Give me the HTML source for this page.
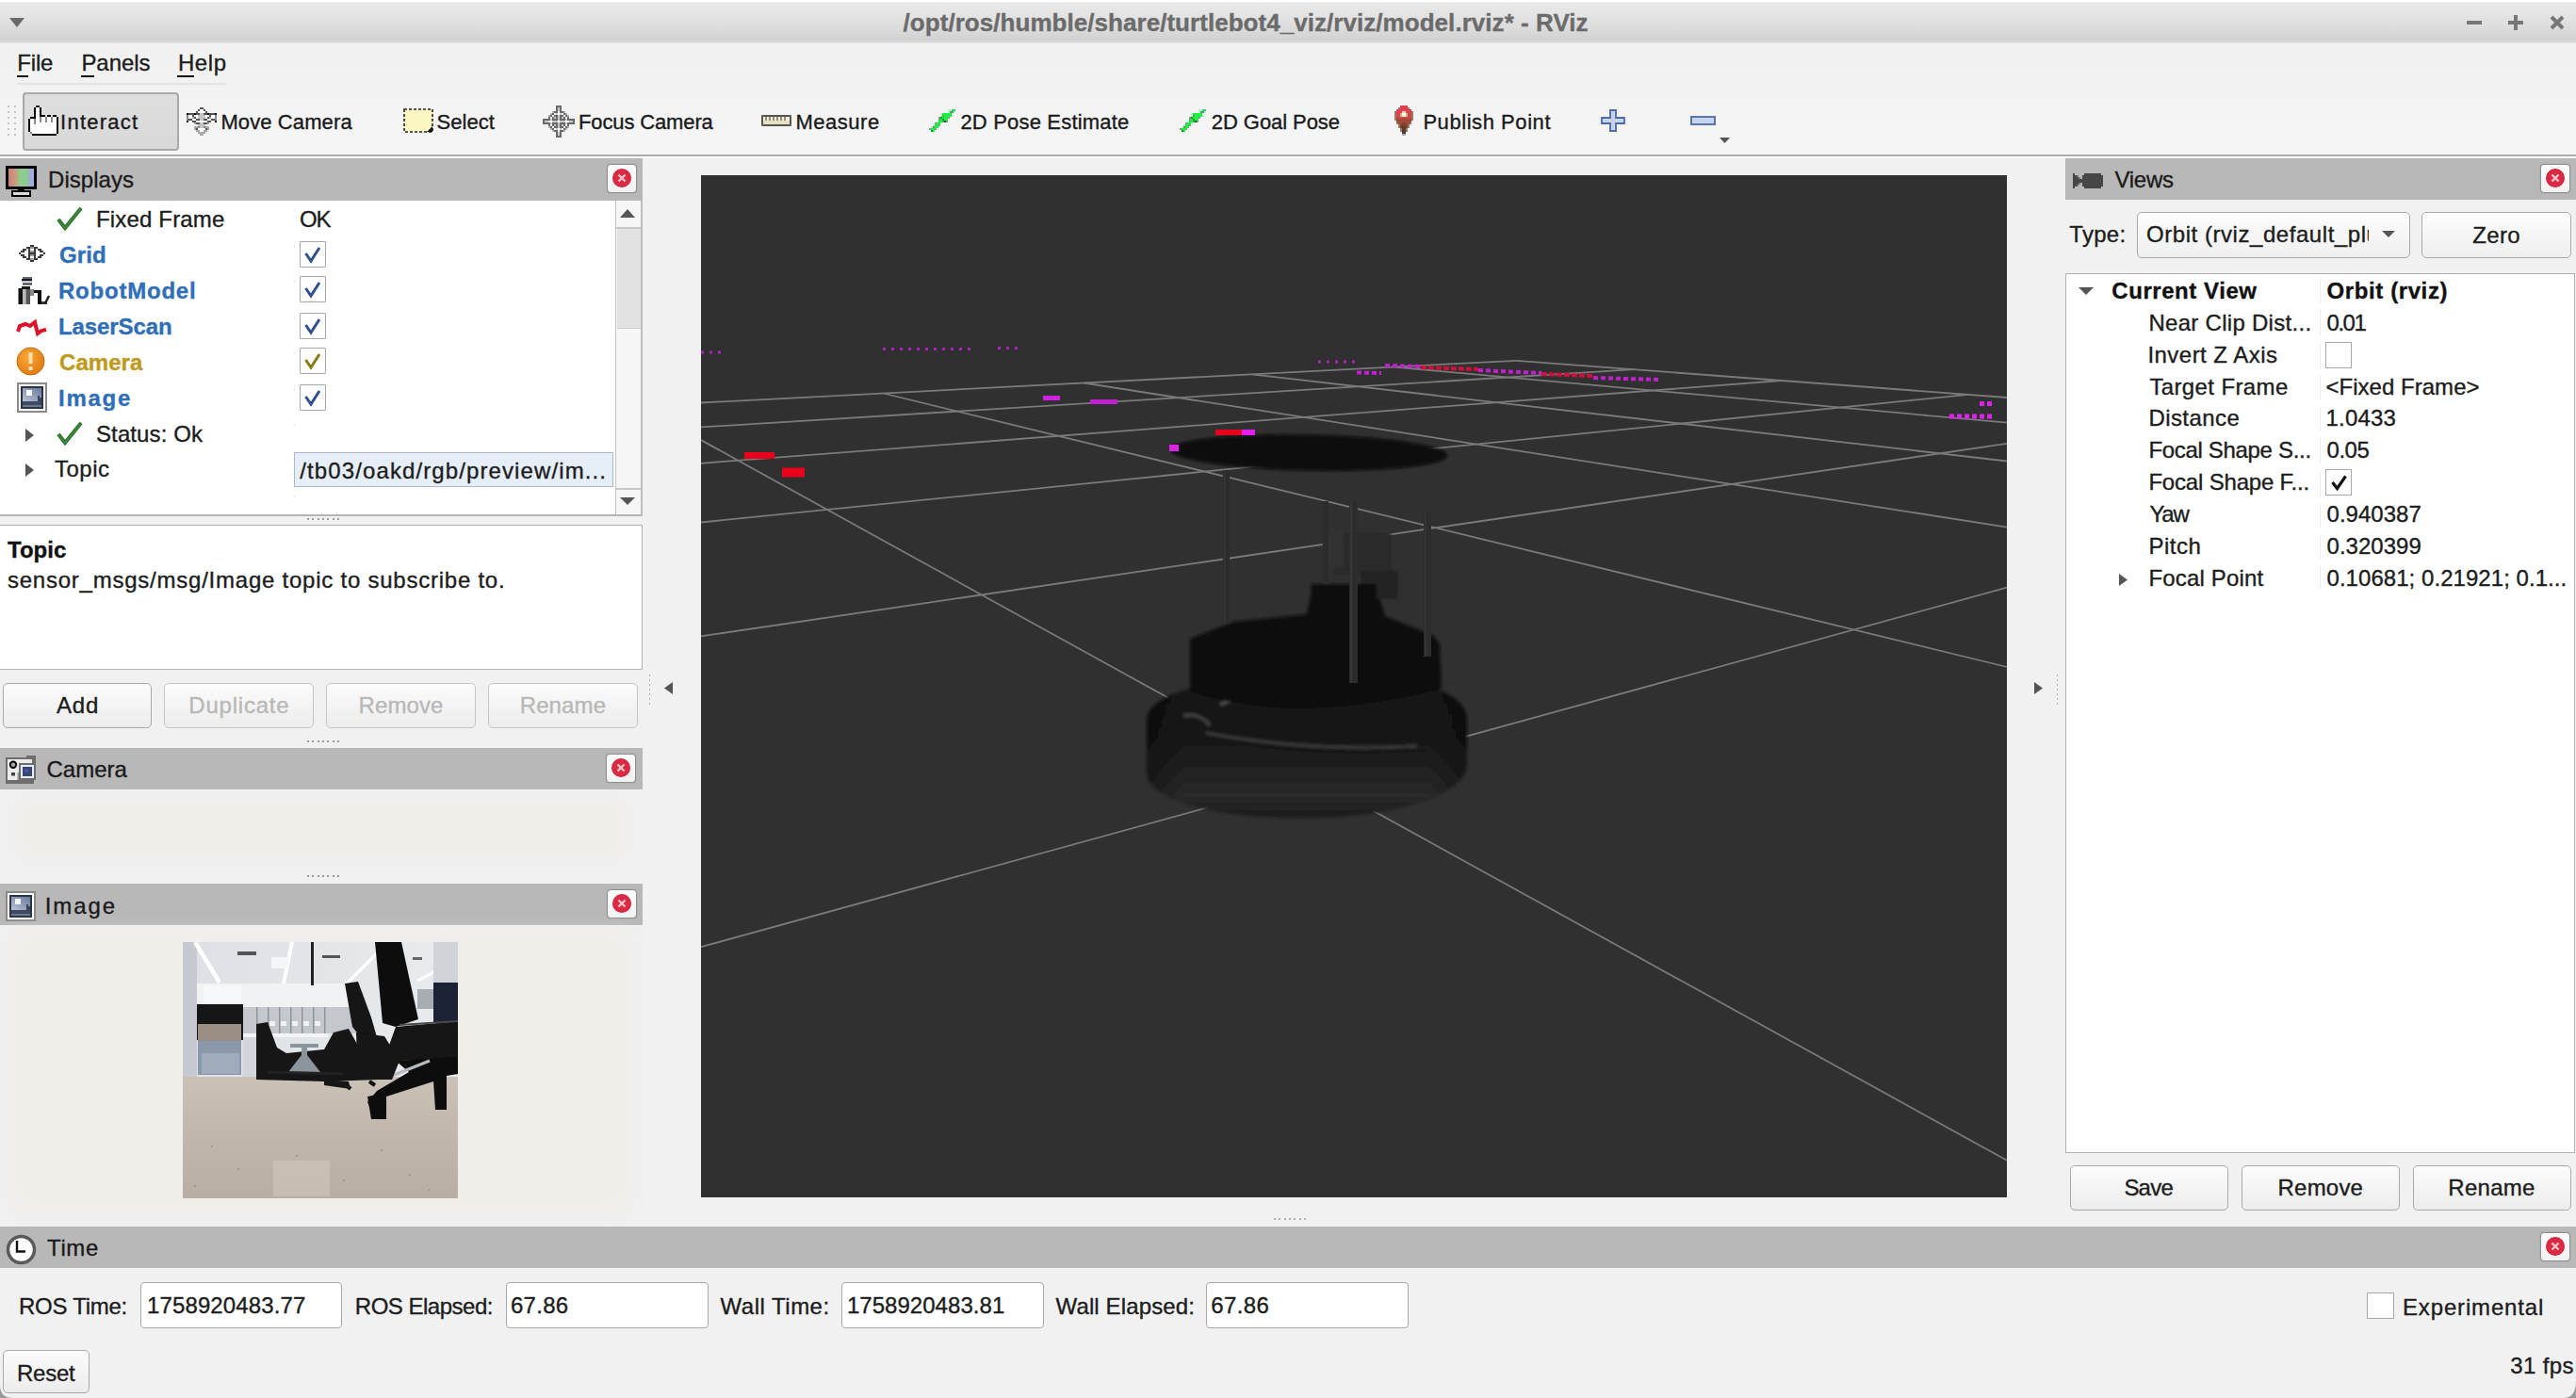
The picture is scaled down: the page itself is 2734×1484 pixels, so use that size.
<!DOCTYPE html>
<html><head><meta charset="utf-8"><style>
html,body{margin:0;padding:0;width:2734px;height:1484px;overflow:hidden;background:#f1f1f1;font-family:'Liberation Sans', sans-serif;}
.a{position:absolute;box-sizing:border-box;}
.t{position:absolute;height:0;line-height:0;white-space:pre;font-family:'Liberation Sans', sans-serif;-webkit-text-stroke:0.35px currentColor;}
svg{position:absolute;overflow:visible;}
</style></head><body>
<div class="a" style="left:0px;top:0px;width:2734px;height:46px;background:linear-gradient(#ffffff 0,#ffffff 2px,#e9e9e9 3px,#e2e2e2 20px,#d9d9d9 34px,#d1d1d1 42px,#dcdcdc 45px,#e8e8e8 46px)"></div><svg style="left:10px;top:19px" width="16" height="10" viewBox="0 0 16 10"><path d="M0 0 L16 0 L8 10 Z" fill="#6a6a6a"/></svg><div class="a" style="left:2618px;top:22px;width:16px;height:4px;background:#777"></div><div class="a" style="left:2662px;top:22px;width:16px;height:4px;background:#777"></div><div class="a" style="left:2668px;top:16px;width:4px;height:16px;background:#777"></div><svg style="left:2706px;top:16px" width="16" height="16" viewBox="0 0 16 16"><path d="M2 2 L14 14 M14 2 L2 14" stroke="#777" stroke-width="4"/></svg><div class="a" style="left:0px;top:46px;width:2734px;height:44px;background:linear-gradient(#f1f1f1,#f2f2f2)"></div><div class="a" style="left:18px;top:88px;width:222px;height:2px;background:#e3e3e3"></div><div class="a" style="left:18px;top:80px;width:12px;height:2px;background:#111"></div><div class="a" style="left:86px;top:80px;width:14px;height:2px;background:#111"></div><div class="a" style="left:188px;top:80px;width:18px;height:2px;background:#111"></div><div class="a" style="left:0px;top:90px;width:2734px;height:74px;background:linear-gradient(#f2f2f2,#f6f6f6)"></div><div class="a" style="left:0px;top:164px;width:2734px;height:2px;background:#adadad"></div><div class="a" style="left:0px;top:166px;width:2734px;height:2px;background:#fbfbfb"></div><div class="a" style="left:8px;top:112px;width:2px;height:2px;background:#c4c4c4"></div><div class="a" style="left:15px;top:112px;width:2px;height:2px;background:#c4c4c4"></div><div class="a" style="left:8px;top:118px;width:2px;height:2px;background:#c4c4c4"></div><div class="a" style="left:15px;top:118px;width:2px;height:2px;background:#c4c4c4"></div><div class="a" style="left:8px;top:124px;width:2px;height:2px;background:#c4c4c4"></div><div class="a" style="left:15px;top:124px;width:2px;height:2px;background:#c4c4c4"></div><div class="a" style="left:8px;top:130px;width:2px;height:2px;background:#c4c4c4"></div><div class="a" style="left:15px;top:130px;width:2px;height:2px;background:#c4c4c4"></div><div class="a" style="left:8px;top:136px;width:2px;height:2px;background:#c4c4c4"></div><div class="a" style="left:15px;top:136px;width:2px;height:2px;background:#c4c4c4"></div><div class="a" style="left:8px;top:142px;width:2px;height:2px;background:#c4c4c4"></div><div class="a" style="left:15px;top:142px;width:2px;height:2px;background:#c4c4c4"></div><div class="a" style="left:24px;top:98px;width:166px;height:62px;background:linear-gradient(#dedede,#d9d9d9);border:2px solid #a9a9a9;border-radius:4px"></div><svg style="left:30px;top:112px" width="32" height="32" shape-rendering="crispEdges"><rect x="8" y="0" width="4" height="2" fill="#0a0a0a"/><rect x="6" y="2" width="2" height="2" fill="#0a0a0a"/><rect x="8" y="2" width="4" height="2" fill="#ffffff"/><rect x="12" y="2" width="2" height="2" fill="#0a0a0a"/><rect x="6" y="4" width="2" height="2" fill="#0a0a0a"/><rect x="8" y="4" width="4" height="2" fill="#ffffff"/><rect x="12" y="4" width="2" height="2" fill="#0a0a0a"/><rect x="6" y="6" width="2" height="2" fill="#0a0a0a"/><rect x="8" y="6" width="4" height="2" fill="#ffffff"/><rect x="12" y="6" width="2" height="2" fill="#0a0a0a"/><rect x="6" y="8" width="2" height="2" fill="#0a0a0a"/><rect x="8" y="8" width="4" height="2" fill="#ffffff"/><rect x="12" y="8" width="2" height="2" fill="#0a0a0a"/><rect x="6" y="10" width="2" height="2" fill="#0a0a0a"/><rect x="8" y="10" width="4" height="2" fill="#ffffff"/><rect x="12" y="10" width="6" height="2" fill="#0a0a0a"/><rect x="20" y="10" width="4" height="2" fill="#0a0a0a"/><rect x="26" y="10" width="4" height="2" fill="#0a0a0a"/><rect x="2" y="12" width="6" height="2" fill="#0a0a0a"/><rect x="8" y="12" width="4" height="2" fill="#ffffff"/><rect x="12" y="12" width="2" height="2" fill="#8a8a8a"/><rect x="14" y="12" width="4" height="2" fill="#ffffff"/><rect x="18" y="12" width="2" height="2" fill="#8a8a8a"/><rect x="20" y="12" width="4" height="2" fill="#ffffff"/><rect x="24" y="12" width="2" height="2" fill="#8a8a8a"/><rect x="26" y="12" width="4" height="2" fill="#ffffff"/><rect x="30" y="12" width="2" height="2" fill="#0a0a0a"/><rect x="0" y="14" width="2" height="2" fill="#0a0a0a"/><rect x="2" y="14" width="4" height="2" fill="#ffffff"/><rect x="6" y="14" width="2" height="2" fill="#8a8a8a"/><rect x="8" y="14" width="4" height="2" fill="#ffffff"/><rect x="12" y="14" width="2" height="2" fill="#8a8a8a"/><rect x="14" y="14" width="4" height="2" fill="#ffffff"/><rect x="18" y="14" width="2" height="2" fill="#8a8a8a"/><rect x="20" y="14" width="4" height="2" fill="#ffffff"/><rect x="24" y="14" width="2" height="2" fill="#8a8a8a"/><rect x="26" y="14" width="4" height="2" fill="#ffffff"/><rect x="30" y="14" width="2" height="2" fill="#0a0a0a"/><rect x="0" y="16" width="2" height="2" fill="#0a0a0a"/><rect x="2" y="16" width="4" height="2" fill="#ffffff"/><rect x="6" y="16" width="2" height="2" fill="#8a8a8a"/><rect x="8" y="16" width="4" height="2" fill="#ffffff"/><rect x="12" y="16" width="2" height="2" fill="#8a8a8a"/><rect x="14" y="16" width="4" height="2" fill="#ffffff"/><rect x="18" y="16" width="2" height="2" fill="#8a8a8a"/><rect x="20" y="16" width="4" height="2" fill="#ffffff"/><rect x="24" y="16" width="2" height="2" fill="#8a8a8a"/><rect x="26" y="16" width="4" height="2" fill="#ffffff"/><rect x="30" y="16" width="2" height="2" fill="#0a0a0a"/><rect x="0" y="18" width="2" height="2" fill="#0a0a0a"/><rect x="2" y="18" width="4" height="2" fill="#ffffff"/><rect x="6" y="18" width="2" height="2" fill="#8a8a8a"/><rect x="8" y="18" width="22" height="2" fill="#ffffff"/><rect x="30" y="18" width="2" height="2" fill="#0a0a0a"/><rect x="0" y="20" width="2" height="2" fill="#0a0a0a"/><rect x="2" y="20" width="28" height="2" fill="#ffffff"/><rect x="30" y="20" width="2" height="2" fill="#0a0a0a"/><rect x="0" y="22" width="2" height="2" fill="#0a0a0a"/><rect x="2" y="22" width="28" height="2" fill="#ffffff"/><rect x="30" y="22" width="2" height="2" fill="#0a0a0a"/><rect x="0" y="24" width="2" height="2" fill="#0a0a0a"/><rect x="2" y="24" width="28" height="2" fill="#ffffff"/><rect x="30" y="24" width="2" height="2" fill="#0a0a0a"/><rect x="0" y="26" width="2" height="2" fill="#0a0a0a"/><rect x="2" y="26" width="28" height="2" fill="#ffffff"/><rect x="30" y="26" width="2" height="2" fill="#0a0a0a"/><rect x="2" y="28" width="2" height="2" fill="#8a8a8a"/><rect x="4" y="28" width="26" height="2" fill="#ffffff"/><rect x="30" y="28" width="2" height="2" fill="#0a0a0a"/><rect x="4" y="30" width="26" height="2" fill="#0a0a0a"/></svg><svg style="left:198px;top:114px" width="32" height="30" shape-rendering="crispEdges"><rect x="14" y="0" width="4" height="2" fill="#555"/><rect x="12" y="2" width="2" height="2" fill="#555"/><rect x="14" y="2" width="4" height="2" fill="#fff"/><rect x="18" y="2" width="2" height="2" fill="#555"/><rect x="10" y="4" width="2" height="2" fill="#555"/><rect x="12" y="4" width="8" height="2" fill="#fff"/><rect x="20" y="4" width="2" height="2" fill="#555"/><rect x="0" y="6" width="2" height="2" fill="#111"/><rect x="2" y="6" width="6" height="2" fill="#555"/><rect x="8" y="6" width="2" height="2" fill="#111"/><rect x="10" y="6" width="4" height="2" fill="#555"/><rect x="14" y="6" width="4" height="2" fill="#c4c4c4"/><rect x="18" y="6" width="4" height="2" fill="#555"/><rect x="22" y="6" width="2" height="2" fill="#111"/><rect x="24" y="6" width="6" height="2" fill="#555"/><rect x="30" y="6" width="2" height="2" fill="#111"/><rect x="0" y="8" width="2" height="2" fill="#8a8a8a"/><rect x="2" y="8" width="4" height="2" fill="#fff"/><rect x="6" y="8" width="2" height="2" fill="#555"/><rect x="8" y="8" width="4" height="2" fill="#fff"/><rect x="12" y="8" width="8" height="2" fill="#c4c4c4"/><rect x="20" y="8" width="4" height="2" fill="#fff"/><rect x="24" y="8" width="2" height="2" fill="#555"/><rect x="26" y="8" width="4" height="2" fill="#fff"/><rect x="30" y="8" width="2" height="2" fill="#8a8a8a"/><rect x="0" y="10" width="2" height="2" fill="#8a8a8a"/><rect x="2" y="10" width="4" height="2" fill="#fff"/><rect x="6" y="10" width="2" height="2" fill="#a8a8a8"/><rect x="8" y="10" width="2" height="2" fill="#555"/><rect x="10" y="10" width="2" height="2" fill="#fff"/><rect x="12" y="10" width="8" height="2" fill="#c4c4c4"/><rect x="20" y="10" width="2" height="2" fill="#fff"/><rect x="22" y="10" width="2" height="2" fill="#555"/><rect x="24" y="10" width="2" height="2" fill="#a8a8a8"/><rect x="26" y="10" width="4" height="2" fill="#fff"/><rect x="30" y="10" width="2" height="2" fill="#8a8a8a"/><rect x="0" y="12" width="2" height="2" fill="#8a8a8a"/><rect x="2" y="12" width="4" height="2" fill="#555"/><rect x="6" y="12" width="4" height="2" fill="#fff"/><rect x="10" y="12" width="4" height="2" fill="#555"/><rect x="14" y="12" width="4" height="2" fill="#c4c4c4"/><rect x="18" y="12" width="4" height="2" fill="#555"/><rect x="22" y="12" width="4" height="2" fill="#fff"/><rect x="26" y="12" width="4" height="2" fill="#555"/><rect x="30" y="12" width="2" height="2" fill="#8a8a8a"/><rect x="0" y="14" width="2" height="2" fill="#111"/><rect x="2" y="14" width="4" height="2" fill="#fff"/><rect x="6" y="14" width="4" height="2" fill="#555"/><rect x="10" y="14" width="12" height="2" fill="#fff"/><rect x="22" y="14" width="4" height="2" fill="#555"/><rect x="26" y="14" width="4" height="2" fill="#fff"/><rect x="30" y="14" width="2" height="2" fill="#111"/><rect x="8" y="16" width="2" height="2" fill="#a8a8a8"/><rect x="10" y="16" width="4" height="2" fill="#555"/><rect x="14" y="16" width="4" height="2" fill="#c4c4c4"/><rect x="18" y="16" width="4" height="2" fill="#555"/><rect x="22" y="16" width="2" height="2" fill="#a8a8a8"/><rect x="10" y="18" width="2" height="2" fill="#fff"/><rect x="12" y="18" width="8" height="2" fill="#c4c4c4"/><rect x="20" y="18" width="2" height="2" fill="#fff"/><rect x="8" y="20" width="4" height="2" fill="#a8a8a8"/><rect x="12" y="20" width="2" height="2" fill="#8a8a8a"/><rect x="14" y="20" width="4" height="2" fill="#c4c4c4"/><rect x="18" y="20" width="2" height="2" fill="#8a8a8a"/><rect x="20" y="20" width="4" height="2" fill="#a8a8a8"/><rect x="8" y="22" width="2" height="2" fill="#a8a8a8"/><rect x="10" y="22" width="2" height="2" fill="#555"/><rect x="12" y="22" width="8" height="2" fill="#fff"/><rect x="20" y="22" width="2" height="2" fill="#555"/><rect x="22" y="22" width="2" height="2" fill="#a8a8a8"/><rect x="10" y="24" width="4" height="2" fill="#a8a8a8"/><rect x="14" y="24" width="4" height="2" fill="#fff"/><rect x="18" y="24" width="4" height="2" fill="#a8a8a8"/><rect x="12" y="26" width="8" height="2" fill="#a8a8a8"/><rect x="14" y="28" width="4" height="2" fill="#a8a8a8"/></svg><svg style="left:428px;top:115px" width="32" height="26" viewBox="0 0 32 26"><rect x="1" y="1" width="30" height="24" fill="#fbf7c0" stroke="#222" stroke-width="1.6" stroke-dasharray="3 2"/><path d="M25 25 L31 19 L31 25 Z" fill="#111"/></svg><svg style="left:576px;top:112px" width="34" height="34" shape-rendering="crispEdges"><rect x="14" y="0" width="6" height="2" fill="#6a6a6a"/><rect x="14" y="2" width="2" height="2" fill="#6a6a6a"/><rect x="16" y="2" width="2" height="2" fill="#c8c8c8"/><rect x="18" y="2" width="2" height="2" fill="#6a6a6a"/><rect x="14" y="4" width="2" height="2" fill="#6a6a6a"/><rect x="16" y="4" width="2" height="2" fill="#c8c8c8"/><rect x="18" y="4" width="2" height="2" fill="#6a6a6a"/><rect x="10" y="6" width="2" height="2" fill="#b0b0b0"/><rect x="12" y="6" width="4" height="2" fill="#6a6a6a"/><rect x="16" y="6" width="2" height="2" fill="#fff"/><rect x="18" y="6" width="4" height="2" fill="#6a6a6a"/><rect x="22" y="6" width="2" height="2" fill="#b0b0b0"/><rect x="8" y="8" width="2" height="2" fill="#b0b0b0"/><rect x="10" y="8" width="2" height="2" fill="#6a6a6a"/><rect x="12" y="8" width="2" height="2" fill="#fff"/><rect x="14" y="8" width="2" height="2" fill="#c8c8c8"/><rect x="16" y="8" width="2" height="2" fill="#fff"/><rect x="18" y="8" width="2" height="2" fill="#c8c8c8"/><rect x="20" y="8" width="2" height="2" fill="#fff"/><rect x="22" y="8" width="2" height="2" fill="#6a6a6a"/><rect x="24" y="8" width="2" height="2" fill="#b0b0b0"/><rect x="6" y="10" width="2" height="2" fill="#b0b0b0"/><rect x="8" y="10" width="2" height="2" fill="#6a6a6a"/><rect x="10" y="10" width="2" height="2" fill="#fff"/><rect x="12" y="10" width="4" height="2" fill="#6a6a6a"/><rect x="16" y="10" width="2" height="2" fill="#c8c8c8"/><rect x="18" y="10" width="4" height="2" fill="#6a6a6a"/><rect x="22" y="10" width="2" height="2" fill="#fff"/><rect x="24" y="10" width="2" height="2" fill="#6a6a6a"/><rect x="26" y="10" width="2" height="2" fill="#b0b0b0"/><rect x="6" y="12" width="2" height="2" fill="#6a6a6a"/><rect x="8" y="12" width="2" height="2" fill="#fff"/><rect x="10" y="12" width="2" height="2" fill="#6a6a6a"/><rect x="12" y="12" width="2" height="2" fill="#c8c8c8"/><rect x="14" y="12" width="2" height="2" fill="#6a6a6a"/><rect x="16" y="12" width="2" height="2" fill="#c8c8c8"/><rect x="18" y="12" width="2" height="2" fill="#6a6a6a"/><rect x="20" y="12" width="2" height="2" fill="#c8c8c8"/><rect x="22" y="12" width="2" height="2" fill="#6a6a6a"/><rect x="24" y="12" width="2" height="2" fill="#fff"/><rect x="26" y="12" width="2" height="2" fill="#6a6a6a"/><rect x="0" y="14" width="8" height="2" fill="#6a6a6a"/><rect x="8" y="14" width="2" height="2" fill="#c8c8c8"/><rect x="10" y="14" width="6" height="2" fill="#6a6a6a"/><rect x="16" y="14" width="2" height="2" fill="#c8c8c8"/><rect x="18" y="14" width="6" height="2" fill="#6a6a6a"/><rect x="24" y="14" width="2" height="2" fill="#c8c8c8"/><rect x="26" y="14" width="8" height="2" fill="#6a6a6a"/><rect x="0" y="16" width="2" height="2" fill="#6a6a6a"/><rect x="2" y="16" width="4" height="2" fill="#c8c8c8"/><rect x="6" y="16" width="4" height="2" fill="#fff"/><rect x="10" y="16" width="6" height="2" fill="#c8c8c8"/><rect x="16" y="16" width="2" height="2" fill="#fff"/><rect x="18" y="16" width="6" height="2" fill="#c8c8c8"/><rect x="24" y="16" width="4" height="2" fill="#fff"/><rect x="28" y="16" width="4" height="2" fill="#c8c8c8"/><rect x="32" y="16" width="2" height="2" fill="#6a6a6a"/><rect x="0" y="18" width="8" height="2" fill="#6a6a6a"/><rect x="8" y="18" width="2" height="2" fill="#c8c8c8"/><rect x="10" y="18" width="6" height="2" fill="#6a6a6a"/><rect x="16" y="18" width="2" height="2" fill="#c8c8c8"/><rect x="18" y="18" width="6" height="2" fill="#6a6a6a"/><rect x="24" y="18" width="2" height="2" fill="#c8c8c8"/><rect x="26" y="18" width="8" height="2" fill="#6a6a6a"/><rect x="6" y="20" width="2" height="2" fill="#6a6a6a"/><rect x="8" y="20" width="2" height="2" fill="#fff"/><rect x="10" y="20" width="2" height="2" fill="#6a6a6a"/><rect x="12" y="20" width="2" height="2" fill="#c8c8c8"/><rect x="14" y="20" width="2" height="2" fill="#6a6a6a"/><rect x="16" y="20" width="2" height="2" fill="#c8c8c8"/><rect x="18" y="20" width="2" height="2" fill="#6a6a6a"/><rect x="20" y="20" width="2" height="2" fill="#c8c8c8"/><rect x="22" y="20" width="2" height="2" fill="#6a6a6a"/><rect x="24" y="20" width="2" height="2" fill="#fff"/><rect x="26" y="20" width="2" height="2" fill="#6a6a6a"/><rect x="6" y="22" width="2" height="2" fill="#b0b0b0"/><rect x="8" y="22" width="2" height="2" fill="#6a6a6a"/><rect x="10" y="22" width="2" height="2" fill="#fff"/><rect x="12" y="22" width="4" height="2" fill="#6a6a6a"/><rect x="16" y="22" width="2" height="2" fill="#c8c8c8"/><rect x="18" y="22" width="4" height="2" fill="#6a6a6a"/><rect x="22" y="22" width="2" height="2" fill="#fff"/><rect x="24" y="22" width="2" height="2" fill="#6a6a6a"/><rect x="26" y="22" width="2" height="2" fill="#b0b0b0"/><rect x="8" y="24" width="2" height="2" fill="#b0b0b0"/><rect x="10" y="24" width="2" height="2" fill="#6a6a6a"/><rect x="12" y="24" width="2" height="2" fill="#fff"/><rect x="14" y="24" width="2" height="2" fill="#c8c8c8"/><rect x="16" y="24" width="2" height="2" fill="#fff"/><rect x="18" y="24" width="2" height="2" fill="#c8c8c8"/><rect x="20" y="24" width="2" height="2" fill="#fff"/><rect x="22" y="24" width="2" height="2" fill="#6a6a6a"/><rect x="24" y="24" width="2" height="2" fill="#b0b0b0"/><rect x="10" y="26" width="2" height="2" fill="#b0b0b0"/><rect x="12" y="26" width="4" height="2" fill="#6a6a6a"/><rect x="16" y="26" width="2" height="2" fill="#fff"/><rect x="18" y="26" width="4" height="2" fill="#6a6a6a"/><rect x="22" y="26" width="2" height="2" fill="#b0b0b0"/><rect x="14" y="28" width="2" height="2" fill="#6a6a6a"/><rect x="16" y="28" width="2" height="2" fill="#c8c8c8"/><rect x="18" y="28" width="2" height="2" fill="#6a6a6a"/><rect x="14" y="30" width="2" height="2" fill="#6a6a6a"/><rect x="16" y="30" width="2" height="2" fill="#c8c8c8"/><rect x="18" y="30" width="2" height="2" fill="#6a6a6a"/><rect x="14" y="32" width="6" height="2" fill="#6a6a6a"/></svg><svg style="left:808px;top:122px" width="32" height="12" shape-rendering="crispEdges"><rect x="0" y="0" width="2" height="2" fill="#6a6a66"/><rect x="2" y="0" width="28" height="2" fill="#57544c"/><rect x="30" y="0" width="2" height="2" fill="#6a6a66"/><rect x="0" y="2" width="2" height="2" fill="#57544c"/><rect x="2" y="2" width="2" height="2" fill="#f2eed8"/><rect x="4" y="2" width="2" height="2" fill="#8e8b78"/><rect x="6" y="2" width="2" height="2" fill="#f2eed8"/><rect x="8" y="2" width="2" height="2" fill="#8e8b78"/><rect x="10" y="2" width="2" height="2" fill="#f2eed8"/><rect x="12" y="2" width="2" height="2" fill="#8e8b78"/><rect x="14" y="2" width="2" height="2" fill="#f2eed8"/><rect x="16" y="2" width="2" height="2" fill="#8e8b78"/><rect x="18" y="2" width="2" height="2" fill="#f2eed8"/><rect x="20" y="2" width="2" height="2" fill="#8e8b78"/><rect x="22" y="2" width="2" height="2" fill="#f2eed8"/><rect x="24" y="2" width="2" height="2" fill="#8e8b78"/><rect x="26" y="2" width="4" height="2" fill="#f2eed8"/><rect x="30" y="2" width="2" height="2" fill="#57544c"/><rect x="0" y="4" width="2" height="2" fill="#57544c"/><rect x="2" y="4" width="2" height="2" fill="#f2eed8"/><rect x="4" y="4" width="2" height="2" fill="#8e8b78"/><rect x="6" y="4" width="2" height="2" fill="#f2eed8"/><rect x="8" y="4" width="2" height="2" fill="#8e8b78"/><rect x="10" y="4" width="2" height="2" fill="#f2eed8"/><rect x="12" y="4" width="2" height="2" fill="#8e8b78"/><rect x="14" y="4" width="2" height="2" fill="#f2eed8"/><rect x="16" y="4" width="2" height="2" fill="#8e8b78"/><rect x="18" y="4" width="2" height="2" fill="#f2eed8"/><rect x="20" y="4" width="2" height="2" fill="#8e8b78"/><rect x="22" y="4" width="2" height="2" fill="#f2eed8"/><rect x="24" y="4" width="2" height="2" fill="#8e8b78"/><rect x="26" y="4" width="4" height="2" fill="#f2eed8"/><rect x="30" y="4" width="2" height="2" fill="#57544c"/><rect x="0" y="6" width="2" height="2" fill="#57544c"/><rect x="2" y="6" width="28" height="2" fill="#e6e0c6"/><rect x="30" y="6" width="2" height="2" fill="#57544c"/><rect x="0" y="8" width="2" height="2" fill="#57544c"/><rect x="2" y="8" width="28" height="2" fill="#e6e0c6"/><rect x="30" y="8" width="2" height="2" fill="#57544c"/><rect x="0" y="10" width="2" height="2" fill="#6a6a66"/><rect x="2" y="10" width="28" height="2" fill="#57544c"/><rect x="30" y="10" width="2" height="2" fill="#6a6a66"/></svg><svg style="left:984px;top:116px" width="32" height="24" shape-rendering="crispEdges"><rect x="22" y="0" width="4" height="2" fill="#b0f8c8"/><rect x="26" y="0" width="4" height="2" fill="#30d070"/><rect x="22" y="2" width="2" height="2" fill="#b0f8c8"/><rect x="24" y="2" width="4" height="2" fill="#5a9a6a"/><rect x="28" y="2" width="2" height="2" fill="#b0f8c8"/><rect x="14" y="4" width="2" height="2" fill="#b0f8c8"/><rect x="16" y="4" width="10" height="2" fill="#1ef040"/><rect x="14" y="6" width="2" height="2" fill="#b0f8c8"/><rect x="16" y="6" width="2" height="2" fill="#5a9a6a"/><rect x="18" y="6" width="8" height="2" fill="#1ef040"/><rect x="26" y="6" width="2" height="2" fill="#b0f8c8"/><rect x="12" y="8" width="2" height="2" fill="#8a9a8a"/><rect x="14" y="8" width="2" height="2" fill="#00a818"/><rect x="16" y="8" width="6" height="2" fill="#1ef040"/><rect x="22" y="8" width="2" height="2" fill="#8a9a8a"/><rect x="12" y="10" width="2" height="2" fill="#8a9a8a"/><rect x="14" y="10" width="2" height="2" fill="#1ef040"/><rect x="16" y="10" width="2" height="2" fill="#00a818"/><rect x="18" y="10" width="4" height="2" fill="#1ef040"/><rect x="10" y="12" width="2" height="2" fill="#b0f8c8"/><rect x="12" y="12" width="4" height="2" fill="#1ef040"/><rect x="16" y="12" width="2" height="2" fill="#5a9a6a"/><rect x="18" y="12" width="2" height="2" fill="#006a20"/><rect x="20" y="12" width="2" height="2" fill="#8a9a8a"/><rect x="8" y="14" width="2" height="2" fill="#8a9a8a"/><rect x="10" y="14" width="4" height="2" fill="#1ef040"/><rect x="14" y="14" width="2" height="2" fill="#b0f8c8"/><rect x="6" y="16" width="2" height="2" fill="#b0f8c8"/><rect x="8" y="16" width="4" height="2" fill="#1ef040"/><rect x="12" y="16" width="2" height="2" fill="#8a9a8a"/><rect x="4" y="18" width="2" height="2" fill="#b0f8c8"/><rect x="6" y="18" width="2" height="2" fill="#5a9a6a"/><rect x="8" y="18" width="4" height="2" fill="#1ef040"/><rect x="2" y="20" width="2" height="2" fill="#8a9a8a"/><rect x="4" y="20" width="4" height="2" fill="#1ef040"/><rect x="8" y="20" width="2" height="2" fill="#8a9a8a"/><rect x="4" y="22" width="2" height="2" fill="#00a818"/><rect x="6" y="22" width="2" height="2" fill="#1ef040"/></svg><svg style="left:1250px;top:116px" width="32" height="24" shape-rendering="crispEdges"><rect x="22" y="0" width="4" height="2" fill="#b0f8c8"/><rect x="26" y="0" width="4" height="2" fill="#30d070"/><rect x="22" y="2" width="2" height="2" fill="#b0f8c8"/><rect x="24" y="2" width="4" height="2" fill="#5a9a6a"/><rect x="28" y="2" width="2" height="2" fill="#b0f8c8"/><rect x="14" y="4" width="2" height="2" fill="#b0f8c8"/><rect x="16" y="4" width="10" height="2" fill="#1ef040"/><rect x="14" y="6" width="2" height="2" fill="#b0f8c8"/><rect x="16" y="6" width="2" height="2" fill="#5a9a6a"/><rect x="18" y="6" width="8" height="2" fill="#1ef040"/><rect x="26" y="6" width="2" height="2" fill="#b0f8c8"/><rect x="12" y="8" width="2" height="2" fill="#8a9a8a"/><rect x="14" y="8" width="2" height="2" fill="#00a818"/><rect x="16" y="8" width="6" height="2" fill="#1ef040"/><rect x="22" y="8" width="2" height="2" fill="#8a9a8a"/><rect x="12" y="10" width="2" height="2" fill="#8a9a8a"/><rect x="14" y="10" width="2" height="2" fill="#1ef040"/><rect x="16" y="10" width="2" height="2" fill="#00a818"/><rect x="18" y="10" width="4" height="2" fill="#1ef040"/><rect x="10" y="12" width="2" height="2" fill="#b0f8c8"/><rect x="12" y="12" width="4" height="2" fill="#1ef040"/><rect x="16" y="12" width="2" height="2" fill="#5a9a6a"/><rect x="18" y="12" width="2" height="2" fill="#006a20"/><rect x="20" y="12" width="2" height="2" fill="#8a9a8a"/><rect x="8" y="14" width="2" height="2" fill="#8a9a8a"/><rect x="10" y="14" width="4" height="2" fill="#1ef040"/><rect x="14" y="14" width="2" height="2" fill="#b0f8c8"/><rect x="6" y="16" width="2" height="2" fill="#b0f8c8"/><rect x="8" y="16" width="4" height="2" fill="#1ef040"/><rect x="12" y="16" width="2" height="2" fill="#8a9a8a"/><rect x="4" y="18" width="2" height="2" fill="#b0f8c8"/><rect x="6" y="18" width="2" height="2" fill="#5a9a6a"/><rect x="8" y="18" width="4" height="2" fill="#1ef040"/><rect x="2" y="20" width="2" height="2" fill="#8a9a8a"/><rect x="4" y="20" width="4" height="2" fill="#1ef040"/><rect x="8" y="20" width="2" height="2" fill="#8a9a8a"/><rect x="4" y="22" width="2" height="2" fill="#00a818"/><rect x="6" y="22" width="2" height="2" fill="#1ef040"/></svg><svg style="left:1480px;top:112px" width="20" height="32" shape-rendering="crispEdges"><rect x="6" y="0" width="8" height="2" fill="#de4250"/><rect x="4" y="2" width="2" height="2" fill="#9a7a6a"/><rect x="6" y="2" width="8" height="2" fill="#de4250"/><rect x="14" y="2" width="2" height="2" fill="#9a7a6a"/><rect x="2" y="4" width="16" height="2" fill="#de4250"/><rect x="0" y="6" width="2" height="2" fill="#9a7a6a"/><rect x="2" y="6" width="6" height="2" fill="#de4250"/><rect x="8" y="6" width="4" height="2" fill="#f8d0d0"/><rect x="12" y="6" width="6" height="2" fill="#de4250"/><rect x="18" y="6" width="2" height="2" fill="#9a7a6a"/><rect x="0" y="8" width="2" height="2" fill="#9a7a6a"/><rect x="2" y="8" width="4" height="2" fill="#de4250"/><rect x="6" y="8" width="2" height="2" fill="#c8b890"/><rect x="8" y="8" width="4" height="2" fill="#fff8d8"/><rect x="12" y="8" width="2" height="2" fill="#c8b890"/><rect x="14" y="8" width="2" height="2" fill="#de4250"/><rect x="16" y="8" width="2" height="2" fill="#c44a40"/><rect x="18" y="8" width="2" height="2" fill="#9a7a6a"/><rect x="0" y="10" width="2" height="2" fill="#9a7a6a"/><rect x="2" y="10" width="4" height="2" fill="#de4250"/><rect x="6" y="10" width="2" height="2" fill="#c8b890"/><rect x="8" y="10" width="4" height="2" fill="#fff8d8"/><rect x="12" y="10" width="2" height="2" fill="#c8b890"/><rect x="14" y="10" width="4" height="2" fill="#c44a40"/><rect x="18" y="10" width="2" height="2" fill="#9a7a6a"/><rect x="0" y="12" width="2" height="2" fill="#9a7a6a"/><rect x="2" y="12" width="16" height="2" fill="#c44a40"/><rect x="18" y="12" width="2" height="2" fill="#9a7a6a"/><rect x="0" y="14" width="2" height="2" fill="#9a7a6a"/><rect x="2" y="14" width="16" height="2" fill="#a04a38"/><rect x="18" y="14" width="2" height="2" fill="#9a7a6a"/><rect x="2" y="16" width="16" height="2" fill="#a04a38"/><rect x="2" y="18" width="2" height="2" fill="#9a7a6a"/><rect x="4" y="18" width="4" height="2" fill="#a04a38"/><rect x="8" y="18" width="4" height="2" fill="#7e4430"/><rect x="12" y="18" width="4" height="2" fill="#a04a38"/><rect x="16" y="18" width="2" height="2" fill="#9a7a6a"/><rect x="4" y="20" width="2" height="2" fill="#9a7a6a"/><rect x="6" y="20" width="8" height="2" fill="#7e4430"/><rect x="14" y="20" width="2" height="2" fill="#9a7a6a"/><rect x="4" y="22" width="2" height="2" fill="#9a7a6a"/><rect x="6" y="22" width="2" height="2" fill="#7e4430"/><rect x="8" y="22" width="4" height="2" fill="#5e3828"/><rect x="12" y="22" width="2" height="2" fill="#7e4430"/><rect x="14" y="22" width="2" height="2" fill="#9a7a6a"/><rect x="6" y="24" width="2" height="2" fill="#9a7a6a"/><rect x="8" y="24" width="4" height="2" fill="#5e3828"/><rect x="12" y="24" width="2" height="2" fill="#9a7a6a"/><rect x="6" y="26" width="2" height="2" fill="#9a7a6a"/><rect x="8" y="26" width="4" height="2" fill="#5e3828"/><rect x="12" y="26" width="2" height="2" fill="#9a7a6a"/><rect x="8" y="28" width="4" height="2" fill="#404040"/><rect x="8" y="30" width="4" height="2" fill="#a8a8a8"/></svg><svg style="left:1699px;top:116px" width="26" height="24" viewBox="0 0 26 24"><path d="M10 1 H16 V9 H25 V15 H16 V23 H10 V15 H1 V9 H10 Z" fill="#c8d4ec" stroke="#4a6aa8" stroke-width="1.8"/></svg><svg style="left:1794px;top:123px" width="27" height="10" viewBox="0 0 27 10"><rect x="1" y="1" width="25" height="8" fill="#c8d4ec" stroke="#4a6aa8" stroke-width="1.8"/></svg><svg style="left:1825px;top:146px" width="11" height="6" viewBox="0 0 11 6"><path d="M0 0 H11 L5.5 6 Z" fill="#555"/></svg><div class="a" style="left:0px;top:168px;width:682px;height:45px;background:#b8b8b8"></div><svg style="left:6px;top:176px" width="33" height="33" viewBox="0 0 33 33"><defs><linearGradient id="scr" x1="0" x2="1"><stop offset="0" stop-color="#d07878"/><stop offset="0.33" stop-color="#c8a080"/><stop offset="0.45" stop-color="#88d088"/><stop offset="0.7" stop-color="#90c890"/><stop offset="0.8" stop-color="#9ab0d0"/><stop offset="1" stop-color="#a8a8f8"/></linearGradient></defs><rect x="1.5" y="1.5" width="30" height="22" fill="url(#scr)" stroke="#000" stroke-width="3"/><rect x="13" y="24" width="7" height="4" fill="#000"/><rect x="7" y="27" width="19" height="5" fill="#ddd" stroke="#000" stroke-width="2"/></svg><div class="a" style="left:644px;top:174px;width:32px;height:31px;background:linear-gradient(#fdfdfd,#f1f1f1);border:1px solid #8f8f8f;border-radius:4px;box-shadow:0 0 1px #777"></div><svg style="left:649px;top:178px" width="22" height="22" viewBox="0 0 22 22"><circle cx="11" cy="11" r="10" fill="#d0203a"/><circle cx="11" cy="11" r="9" fill="#dc2a44"/><path d="M7.5 7.5 L14.5 14.5 M14.5 7.5 L7.5 14.5" stroke="#f4c8c8" stroke-width="2.4"/></svg><div class="a" style="left:0px;top:213px;width:653px;height:334px;background:#fff"></div><div class="a" style="left:0px;top:546px;width:682px;height:2px;background:#b4b4b4"></div><div class="a" style="left:680px;top:213px;width:2px;height:335px;background:#bdbdbd"></div><div class="a" style="left:653px;top:213px;width:27px;height:333px;background:#f6f6f6;border-left:1.5px solid #c4c4c4"></div><div class="a" style="left:654px;top:241px;width:26px;height:2px;background:#c8c8c8"></div><div class="a" style="left:655px;top:243px;width:25px;height:106px;background:#e2e2e2;border-bottom:1.5px solid #cdcdcd"></div><div class="a" style="left:654px;top:518px;width:26px;height:2px;background:#c8c8c8"></div><svg style="left:658px;top:222px" width="16" height="9" viewBox="0 0 16 9"><path d="M0 9 L8 0 L16 9 Z" fill="#555"/></svg><svg style="left:658px;top:528px" width="16" height="8" viewBox="0 0 16 8"><path d="M0 0 H16 L8 8 Z" fill="#555"/></svg><div class="a" style="left:312px;top:222px;width:1px;height:320px;background:repeating-linear-gradient(#e4e4e4 0 2px,transparent 2px 38px)"></div><svg style="left:60px;top:219px" width="28" height="26" viewBox="0 0 28 26"><path d="M2 14 L9 23 L26 2" fill="none" stroke="#2a6a2a" stroke-width="4" stroke-linejoin="miter"/><path d="M2 14 L9 23 L26 2" fill="none" stroke="#3c8a3c" stroke-width="2"/></svg><svg style="left:20px;top:260px" width="28" height="18" shape-rendering="crispEdges"><rect x="12" y="0" width="4" height="2" fill="#3a3a3a"/><rect x="8" y="2" width="4" height="2" fill="#3a3a3a"/><rect x="12" y="2" width="4" height="2" fill="#9a9a9a"/><rect x="16" y="2" width="4" height="2" fill="#3a3a3a"/><rect x="4" y="4" width="4" height="2" fill="#3a3a3a"/><rect x="8" y="4" width="2" height="2" fill="#ffffff"/><rect x="10" y="4" width="2" height="2" fill="#3a3a3a"/><rect x="12" y="4" width="4" height="2" fill="#ffffff"/><rect x="16" y="4" width="2" height="2" fill="#3a3a3a"/><rect x="18" y="4" width="2" height="2" fill="#ffffff"/><rect x="20" y="4" width="4" height="2" fill="#3a3a3a"/><rect x="2" y="6" width="4" height="2" fill="#3a3a3a"/><rect x="6" y="6" width="4" height="2" fill="#ffffff"/><rect x="10" y="6" width="2" height="2" fill="#3a3a3a"/><rect x="12" y="6" width="4" height="2" fill="#9a9a9a"/><rect x="16" y="6" width="2" height="2" fill="#3a3a3a"/><rect x="18" y="6" width="4" height="2" fill="#ffffff"/><rect x="22" y="6" width="4" height="2" fill="#3a3a3a"/><rect x="0" y="8" width="2" height="2" fill="#3a3a3a"/><rect x="2" y="8" width="8" height="2" fill="#ffffff"/><rect x="10" y="8" width="8" height="2" fill="#3a3a3a"/><rect x="18" y="8" width="8" height="2" fill="#ffffff"/><rect x="26" y="8" width="2" height="2" fill="#3a3a3a"/><rect x="2" y="10" width="4" height="2" fill="#3a3a3a"/><rect x="6" y="10" width="4" height="2" fill="#ffffff"/><rect x="10" y="10" width="2" height="2" fill="#3a3a3a"/><rect x="12" y="10" width="4" height="2" fill="#9a9a9a"/><rect x="16" y="10" width="2" height="2" fill="#3a3a3a"/><rect x="18" y="10" width="4" height="2" fill="#ffffff"/><rect x="22" y="10" width="4" height="2" fill="#3a3a3a"/><rect x="4" y="12" width="4" height="2" fill="#3a3a3a"/><rect x="8" y="12" width="2" height="2" fill="#ffffff"/><rect x="10" y="12" width="2" height="2" fill="#3a3a3a"/><rect x="12" y="12" width="4" height="2" fill="#ffffff"/><rect x="16" y="12" width="2" height="2" fill="#3a3a3a"/><rect x="18" y="12" width="2" height="2" fill="#ffffff"/><rect x="20" y="12" width="4" height="2" fill="#3a3a3a"/><rect x="8" y="14" width="4" height="2" fill="#3a3a3a"/><rect x="12" y="14" width="4" height="2" fill="#9a9a9a"/><rect x="16" y="14" width="4" height="2" fill="#3a3a3a"/><rect x="12" y="16" width="4" height="2" fill="#3a3a3a"/></svg><svg style="left:18px;top:293px" width="34" height="32" viewBox="0 0 34 32"><rect x="6" y="1" width="10" height="2" fill="#666"/><rect x="5" y="3" width="11" height="2.5" fill="#15152a"/><rect x="6" y="5.5" width="10" height="2" fill="#d8d8e8"/><rect x="6" y="7.5" width="10" height="2" fill="#333"/><rect x="1.5" y="13" width="4.5" height="17" fill="#111"/><rect x="6" y="14" width="3.5" height="16" fill="#b8b8b8"/><rect x="9.5" y="11" width="4.5" height="19" fill="#555"/><rect x="5" y="11" width="9" height="3" fill="#1a1a1a"/><rect x="14" y="14" width="4" height="7" fill="#888"/><rect x="18" y="15" width="4" height="3" fill="#111"/><rect x="22" y="15" width="4" height="15" fill="#111"/><rect x="26" y="27" width="6" height="3" fill="#333"/><path d="M30 29 L34 21" stroke="#222" stroke-width="2.5"/></svg><svg style="left:17px;top:338px" width="34" height="21" viewBox="0 0 34 21"><path d="M2 14 L4 8 L10 6 L15 8 L20 4 L23 16 L27 13 L32 12" fill="none" stroke="#e0102a" stroke-width="4"/></svg><svg style="left:17px;top:368px" width="31" height="31" viewBox="0 0 31 31"><defs><radialGradient id="org" cx="0.4" cy="0.35" r="0.7"><stop offset="0" stop-color="#f8a838"/><stop offset="1" stop-color="#e07a10"/></radialGradient></defs><circle cx="15.5" cy="15.5" r="14.5" fill="url(#org)" stroke="#c86a10" stroke-width="1"/><rect x="13.5" y="6" width="4" height="12" fill="#fde0b0"/><rect x="13.5" y="21" width="4" height="4" fill="#fde0b0"/></svg><svg style="left:18px;top:406px" width="32" height="32" viewBox="0 0 32 32"><defs><linearGradient id="imgp2" x1="1" y1="0" x2="0" y2="1"><stop offset="0" stop-color="#6a7a9a"/><stop offset="1" stop-color="#b8c4d8"/></linearGradient></defs><rect x="0" y="0" width="32" height="32" fill="#8a8a8a"/><rect x="2" y="2" width="28" height="28" fill="#fff"/><rect x="4" y="4" width="24" height="24" fill="#2a3448"/><rect x="6" y="6" width="20" height="14" fill="url(#imgp2)"/><rect x="10" y="8" width="6" height="6" fill="#f4f8ff"/><path d="M22 14 H24 V16 H26 V20 H22 Z" fill="#3a4658"/><rect x="6" y="20" width="20" height="4" fill="#3e4a5e"/><rect x="6" y="24" width="20" height="2" fill="#6a7890"/></svg><svg style="left:27px;top:455px" width="9" height="14" viewBox="0 0 9 14"><path d="M0 0 L9 7 L0 14 Z" fill="#555"/></svg><svg style="left:60px;top:447px" width="28" height="26" viewBox="0 0 28 26"><path d="M2 14 L9 23 L26 2" fill="none" stroke="#2a6a2a" stroke-width="4" stroke-linejoin="miter"/><path d="M2 14 L9 23 L26 2" fill="none" stroke="#3c8a3c" stroke-width="2"/></svg><svg style="left:27px;top:492px" width="9" height="14" viewBox="0 0 9 14"><path d="M0 0 L9 7 L0 14 Z" fill="#555"/></svg><div class="a" style="left:318px;top:256px;width:28px;height:28px;background:#fff;border:1.5px solid #a8a8a8;border-radius:1px"></div><svg style="left:323px;top:262px" width="18" height="17" viewBox="0 0 18 17"><path d="M1.5 7 L7 15 L16 1" fill="none" stroke="#2f4f8f" stroke-width="3"/></svg><div class="a" style="left:318px;top:293px;width:28px;height:28px;background:#fff;border:1.5px solid #a8a8a8;border-radius:1px"></div><svg style="left:323px;top:299px" width="18" height="17" viewBox="0 0 18 17"><path d="M1.5 7 L7 15 L16 1" fill="none" stroke="#2f4f8f" stroke-width="3"/></svg><div class="a" style="left:318px;top:332px;width:28px;height:28px;background:#fff;border:1.5px solid #a8a8a8;border-radius:1px"></div><svg style="left:323px;top:338px" width="18" height="17" viewBox="0 0 18 17"><path d="M1.5 7 L7 15 L16 1" fill="none" stroke="#2f4f8f" stroke-width="3"/></svg><div class="a" style="left:318px;top:369px;width:28px;height:28px;background:#fff;border:1.5px solid #a8a8a8;border-radius:1px"></div><svg style="left:323px;top:375px" width="18" height="17" viewBox="0 0 18 17"><path d="M1.5 7 L7 15 L16 1" fill="none" stroke="#8a7a10" stroke-width="3"/></svg><div class="a" style="left:318px;top:408px;width:28px;height:28px;background:#fff;border:1.5px solid #a8a8a8;border-radius:1px"></div><svg style="left:323px;top:414px" width="18" height="17" viewBox="0 0 18 17"><path d="M1.5 7 L7 15 L16 1" fill="none" stroke="#2f4f8f" stroke-width="3"/></svg><div class="a" style="left:312px;top:480px;width:339px;height:37px;background:#e6eef8;border:1.5px solid #aab8c8"></div><div class="a" style="left:326.0px;top:550px;width:2px;height:2px;background:#9a9a9a"></div><div class="a" style="left:331.3px;top:550px;width:2px;height:2px;background:#9a9a9a"></div><div class="a" style="left:336.6px;top:550px;width:2px;height:2px;background:#9a9a9a"></div><div class="a" style="left:341.9px;top:550px;width:2px;height:2px;background:#9a9a9a"></div><div class="a" style="left:347.2px;top:550px;width:2px;height:2px;background:#9a9a9a"></div><div class="a" style="left:352.5px;top:550px;width:2px;height:2px;background:#9a9a9a"></div><div class="a" style="left:357.8px;top:550px;width:2px;height:2px;background:#9a9a9a"></div><div class="a" style="left:0px;top:557px;width:682px;height:154px;background:#fff;border:1.5px solid #b4b4b4;border-left:none"></div><div class="a" style="left:3px;top:725px;width:158px;height:48px;background:linear-gradient(#fcfcfc,#ececec);border:1.5px solid #a9a9a9;border-radius:5px"></div><div class="a" style="left:174px;top:725px;width:159px;height:48px;background:linear-gradient(#fcfcfc,#ececec);border:1.5px solid #c6c6c6;border-radius:5px"></div><div class="a" style="left:346px;top:725px;width:159px;height:48px;background:linear-gradient(#fcfcfc,#ececec);border:1.5px solid #c6c6c6;border-radius:5px"></div><div class="a" style="left:518px;top:725px;width:159px;height:48px;background:linear-gradient(#fcfcfc,#ececec);border:1.5px solid #c6c6c6;border-radius:5px"></div><div class="a" style="left:326.0px;top:786px;width:2px;height:2px;background:#9a9a9a"></div><div class="a" style="left:331.3px;top:786px;width:2px;height:2px;background:#9a9a9a"></div><div class="a" style="left:336.6px;top:786px;width:2px;height:2px;background:#9a9a9a"></div><div class="a" style="left:341.9px;top:786px;width:2px;height:2px;background:#9a9a9a"></div><div class="a" style="left:347.2px;top:786px;width:2px;height:2px;background:#9a9a9a"></div><div class="a" style="left:352.5px;top:786px;width:2px;height:2px;background:#9a9a9a"></div><div class="a" style="left:357.8px;top:786px;width:2px;height:2px;background:#9a9a9a"></div><svg style="left:705px;top:724px" width="9" height="13" viewBox="0 0 9 13"><path d="M9 0 L0 6.5 L9 13 Z" fill="#555"/></svg><div class="a" style="left:689px;top:716px;width:1px;height:34px;background:repeating-linear-gradient(#b0b0b0 0 2px,transparent 2px 5px)"></div><div class="a" style="left:0px;top:794px;width:682px;height:44px;background:#b8b8b8"></div><svg style="left:6px;top:802px" width="32" height="30" viewBox="0 0 32 30"><rect x="22" y="0" width="10" height="3" fill="#6e6e6e"/><rect x="30" y="0" width="2" height="26" fill="#6e6e6e"/><rect x="0" y="2" width="30" height="28" fill="#6e6e6e"/><rect x="2" y="4" width="26" height="22" fill="#ececec"/><circle cx="8" cy="9.8" r="3.2" fill="#aaa" stroke="#000" stroke-width="2"/><rect x="6" y="18" width="4" height="3.5" fill="#444"/><rect x="12.5" y="18" width="3" height="10" fill="#999"/><rect x="14" y="8" width="18" height="18" fill="#6e6e6e"/><rect x="16" y="10" width="14" height="14" fill="#e4ecf8"/><rect x="18" y="12" width="10" height="10" fill="#34486a"/><rect x="20" y="14" width="4" height="4" fill="#4a4ab0"/><rect x="2" y="26" width="28" height="4" fill="#6e6e6e"/></svg><div class="a" style="left:643px;top:800px;width:32px;height:31px;background:linear-gradient(#fdfdfd,#f1f1f1);border:1px solid #8f8f8f;border-radius:4px;box-shadow:0 0 1px #777"></div><svg style="left:648px;top:804px" width="22" height="22" viewBox="0 0 22 22"><circle cx="11" cy="11" r="10" fill="#d0203a"/><circle cx="11" cy="11" r="9" fill="#dc2a44"/><path d="M7.5 7.5 L14.5 14.5 M14.5 7.5 L7.5 14.5" stroke="#f4c8c8" stroke-width="2.4"/></svg><div class="a" style="left:20px;top:852px;width:642px;height:56px;background:#f1ede9;filter:blur(8px)"></div><div class="a" style="left:326.0px;top:929px;width:2px;height:2px;background:#9a9a9a"></div><div class="a" style="left:331.3px;top:929px;width:2px;height:2px;background:#9a9a9a"></div><div class="a" style="left:336.6px;top:929px;width:2px;height:2px;background:#9a9a9a"></div><div class="a" style="left:341.9px;top:929px;width:2px;height:2px;background:#9a9a9a"></div><div class="a" style="left:347.2px;top:929px;width:2px;height:2px;background:#9a9a9a"></div><div class="a" style="left:352.5px;top:929px;width:2px;height:2px;background:#9a9a9a"></div><div class="a" style="left:357.8px;top:929px;width:2px;height:2px;background:#9a9a9a"></div><div class="a" style="left:0px;top:938px;width:682px;height:44px;background:#b8b8b8"></div><svg style="left:6px;top:946px" width="32" height="32" viewBox="0 0 32 32"><defs><linearGradient id="imgp" x1="1" y1="0" x2="0" y2="1"><stop offset="0" stop-color="#6a7a9a"/><stop offset="1" stop-color="#b8c4d8"/></linearGradient></defs><rect x="0" y="0" width="32" height="32" fill="#8a8a8a"/><rect x="2" y="2" width="28" height="28" fill="#fff"/><rect x="4" y="4" width="24" height="24" fill="#2a3448"/><rect x="6" y="6" width="20" height="14" fill="url(#imgp)"/><rect x="10" y="8" width="6" height="6" fill="#f4f8ff"/><path d="M22 14 H24 V16 H26 V20 H22 Z" fill="#3a4658"/><rect x="6" y="20" width="20" height="4" fill="#3e4a5e"/><rect x="6" y="24" width="20" height="2" fill="#6a7890"/></svg><div class="a" style="left:644px;top:944px;width:32px;height:31px;background:linear-gradient(#fdfdfd,#f1f1f1);border:1px solid #8f8f8f;border-radius:4px;box-shadow:0 0 1px #777"></div><svg style="left:649px;top:948px" width="22" height="22" viewBox="0 0 22 22"><circle cx="11" cy="11" r="10" fill="#d0203a"/><circle cx="11" cy="11" r="9" fill="#dc2a44"/><path d="M7.5 7.5 L14.5 14.5 M14.5 7.5 L7.5 14.5" stroke="#f4c8c8" stroke-width="2.4"/></svg><div class="a" style="left:14px;top:992px;width:654px;height:290px;background:#f1ede9;filter:blur(10px)"></div><svg style="left:194px;top:1000px" width="292" height="272" viewBox="0 0 292 272"><defs><linearGradient id="floor" x1="0" y1="0" x2="0" y2="1"><stop offset="0" stop-color="#cbc2b7"/><stop offset="0.45" stop-color="#c1b7ac"/><stop offset="1" stop-color="#b9aea3"/></linearGradient>
<linearGradient id="ceil" x1="0" y1="0" x2="1" y2="0"><stop offset="0" stop-color="#dde0e4"/><stop offset="1" stop-color="#e9ecee"/></linearGradient>
<filter id="bl"><feGaussianBlur stdDeviation="0.7"/></filter></defs>
<g filter="url(#bl)">
<rect x="0" y="0" width="292" height="145" fill="url(#ceil)"/>
<rect x="0" y="143" width="292" height="129" fill="url(#floor)"/>
<rect x="0" y="0" width="15" height="143" fill="#c6cad0"/>
<rect x="15" y="44" width="170" height="26" fill="#f0f2f3"/>
<rect x="22" y="46" width="40" height="18" fill="#f6f8f9"/>
<rect x="58" y="10" width="20" height="4" fill="#555"/><rect x="148" y="14" width="19" height="3" fill="#555"/><rect x="244" y="16" width="10" height="3" fill="#666"/>
<path d="M13 0 L39 43" stroke="#fff" stroke-width="4.5"/>
<path d="M116 0 L107 44" stroke="#fff" stroke-width="4"/>
<rect x="94" y="16" width="18" height="12" fill="#f4f6f8"/>
<path d="M206 12 L172 46" stroke="#fff" stroke-width="3.5"/>
<path d="M268 31 L249 41" stroke="#fff" stroke-width="3"/>
<rect x="136" y="0" width="3" height="46" fill="#222"/>
<rect x="15" y="66" width="49" height="38" fill="#141414"/>
<rect x="64" y="69" width="120" height="28" fill="#c4c8cc"/>
<g fill="#8e949a"><rect x="78" y="69" width="1.5" height="28"/><rect x="90" y="69" width="1.5" height="28"/><rect x="102" y="69" width="1.5" height="28"/><rect x="114" y="69" width="1.5" height="28"/><rect x="126" y="69" width="1.5" height="28"/><rect x="138" y="69" width="1.5" height="28"/><rect x="150" y="69" width="1.5" height="28"/></g>
<g fill="#f0f2f4"><rect x="92" y="84" width="6" height="5"/><rect x="104" y="84" width="6" height="5"/><rect x="116" y="84" width="6" height="5"/><rect x="128" y="84" width="6" height="5"/><rect x="140" y="84" width="6" height="5"/></g>
<rect x="64" y="97" width="90" height="4" fill="#f2f4f6"/>
<rect x="64" y="101" width="20" height="42" fill="#d2d6da"/>
<rect x="16" y="87" width="46" height="20" fill="#9a8e84"/>
<rect x="16" y="105" width="46" height="36" fill="#8a98ac"/>
<rect x="20" y="118" width="40" height="22" fill="#a0acbc"/>
<rect x="249" y="50" width="17" height="21" fill="#a8adb2"/>
<rect x="266" y="0" width="26" height="43" fill="#d0d4d8"/>
<path d="M78 87 L90 85 L100 112 L110 118 L150 114 L160 96 L176 92 L186 110 L200 120 L208 146 L150 148 L78 146 Z" fill="#151515"/>
<path d="M114 108 L144 108 L144 112 L132 112 L132 120 L146 138 L112 138 L126 120 L126 112 L114 112 Z" fill="#8c949c"/>
<path d="M172 44 L186 42 L200 80 L208 108 L196 110 L180 90 Z" fill="#121212"/>
<path d="M204 0 L232 0 L250 82 L226 90 L212 86 Z" fill="#111"/>
<rect x="266" y="43" width="26" height="42" fill="#1d2436"/>
<path d="M226 90 L292 84 L292 124 L230 126 L216 118 Z" fill="#141414"/>
<path d="M230 88 L292 84" stroke="#4a4a4a" stroke-width="2"/>
<path d="M226 126 L292 122 L292 140 L280 142 L280 178 L268 178 L266 148 L216 164 L212 172 L200 178 L196 170 L206 158 L240 138 Z" fill="#101010"/>
<path d="M196 164 L216 160 L216 188 L200 188 Z" fill="#0c0c0c"/>
<path d="M222 142 L262 126" stroke="#b8bcc0" stroke-width="3"/>
<path d="M172 150 L178 156 M198 148 L204 152" stroke="#111" stroke-width="4"/>
<path d="M90 138 L170 140" stroke="#222" stroke-width="3"/><path d="M184 96 L214 100 L230 126 L222 146 L186 146 Z" fill="#131313"/><path d="M150 146 L176 148 L178 156 L150 152 Z" fill="#181818"/>
</g>
<g fill="#e4ddd4" opacity="0.3"><rect x="96" y="232" width="60" height="38"/></g>
<g fill="#8a8278" opacity="0.5"><rect x="30" y="216" width="2" height="2"/><rect x="58" y="240" width="2" height="2"/><rect x="170" y="252" width="2" height="2"/><rect x="210" y="220" width="2" height="2"/><rect x="240" y="246" width="2" height="2"/><rect x="12" y="258" width="2" height="2"/><rect x="120" y="226" width="2" height="2"/><rect x="260" y="262" width="2" height="2"/></g></svg><svg style="left:744px;top:186px" width="1386" height="1085" viewBox="0 0 1386 1085"><rect width="1386" height="1085" fill="#303030"/><g stroke="#7a7a7a" stroke-width="1.8"><line x1="865.5" y1="196.8" x2="1386.0" y2="236.0"/><line x1="865.5" y1="196.8" x2="0.0" y2="241.5"/><line x1="735.6" y1="203.5" x2="1386.0" y2="262.7"/><line x1="991.3" y1="206.2" x2="0.0" y2="267.4"/><line x1="584.5" y1="211.3" x2="1386.0" y2="303.5"/><line x1="1147.0" y1="218.0" x2="0.0" y2="305.8"/><line x1="406.4" y1="220.5" x2="1386.0" y2="373.6"/><line x1="1344.9" y1="232.9" x2="0.0" y2="368.5"/><line x1="193.4" y1="231.5" x2="1386.0" y2="522.0"/><line x1="1386.0" y1="284.8" x2="0.0" y2="489.4"/><line x1="0.0" y1="281.1" x2="1386.0" y2="1045.8"/><line x1="1386.0" y1="437.7" x2="0.0" y2="819.2"/></g>
<defs>
<linearGradient id="baseg" x1="0" y1="0" x2="0" y2="1"><stop offset="0" stop-color="#121212"/><stop offset="0.45" stop-color="#171717"/><stop offset="0.62" stop-color="#1e1e1e"/><stop offset="0.85" stop-color="#292929"/><stop offset="1" stop-color="#1a1a1a"/></linearGradient>
<linearGradient id="baseh" x1="0" y1="0" x2="1" y2="0"><stop offset="0" stop-color="#000" stop-opacity="0.35"/><stop offset="0.12" stop-color="#000" stop-opacity="0"/><stop offset="0.88" stop-color="#000" stop-opacity="0"/><stop offset="1" stop-color="#000" stop-opacity="0.35"/></linearGradient>
<filter id="rb"><feGaussianBlur stdDeviation="1.5"/></filter>
</defs>
<g filter="url(#rb)">
<path d="M473 578 C473 518 813 505 813 578 L813 624 C813 700 473 700 473 633 Z" fill="url(#baseg)"/>
<path d="M473 578 C473 518 813 505 813 578 L813 624 C813 700 473 700 473 633 Z" fill="url(#baseh)"/>
<path d="M536 592 Q640 612 760 606" fill="none" stroke="#383838" stroke-width="3.5"/>
<path d="M540 598 Q640 618 770 610" fill="none" stroke="#0e0e0e" stroke-width="1.5"/>
<path d="M512 574 Q530 570 540 584" fill="none" stroke="#3c3c3c" stroke-width="4"/>
<path d="M551 562 Q582 546 614 560" fill="none" stroke="#484848" stroke-width="4"/>
<path d="M519 492 L565 474 L643 466 L649 437 L717 437 L726 468 L778 489 L784 498 L786 545 Q700 568 620 566 Q560 562 519 548 Z" fill="#111"/>
<rect x="671.6" y="379.5" width="61" height="45" fill="#2a2a2a"/>
<rect x="660" y="376" width="22" height="40" fill="#333"/>
<rect x="700" y="420" width="40" height="30" fill="#202020"/>
<rect x="647.4" y="434" width="69" height="45" fill="#0e0e0e"/>
</g>
<g fill="#2c2c2c">
<rect x="554" y="313" width="7" height="163"/>
<rect x="688" y="347" width="9" height="192"/>
<rect x="660" y="346" width="6" height="88"/>
<rect x="767" y="357" width="8" height="154"/>
</g>
<g fill="#363636">
<rect x="555" y="313" width="1.5" height="163"/>
<rect x="689" y="347" width="2" height="192"/>
<rect x="768" y="357" width="1.5" height="154"/>
</g>
<ellipse cx="645" cy="294.5" rx="147" ry="19" fill="#070707" transform="rotate(1.2 645 294.5)" filter="url(#rb)"/>
<g>
<rect x="46" y="294" width="32" height="7" fill="#e8001c"/>
<rect x="86" y="310.5" width="24" height="10" fill="#e8001c"/>
<rect x="363" y="234" width="18" height="5" fill="#d020e0"/>
<rect x="413" y="238" width="29" height="5" fill="#c020d0"/>
<rect x="546" y="270" width="28" height="6" fill="#e8001c"/>
<rect x="574" y="270" width="14" height="6" fill="#e020f0"/>
<rect x="497" y="286" width="10" height="7" fill="#e020f0"/>
<path d="M1357 242.5 H1370 M1325 256 H1373" stroke="#e020f0" stroke-width="5" stroke-dasharray="5 3"/>
<path d="M193 184.5 H286 M315 183.5 H339 M0 188 H22 M655 198 H694" stroke="#b020c0" stroke-width="3" stroke-dasharray="3 6"/>
<path d="M696 209.5 L722 210 M726 202 L764 203 M825 207 L892 210 M947 215 L1017 217" stroke="#c020d0" stroke-width="4" stroke-dasharray="5 3"/>
<path d="M764 204 L825 206 M892 211 L947 213" stroke="#d0103a" stroke-width="4" stroke-dasharray="6 2"/>
</g>
</svg><svg style="left:2159px;top:724px" width="9" height="13" viewBox="0 0 9 13"><path d="M0 0 L9 6.5 L0 13 Z" fill="#555"/></svg><div class="a" style="left:2183px;top:716px;width:1px;height:34px;background:repeating-linear-gradient(#b0b0b0 0 2px,transparent 2px 5px)"></div><div class="a" style="left:2192px;top:168px;width:542px;height:44px;background:#b8b8b8"></div><svg style="left:2200px;top:184px" width="32" height="16" shape-rendering="crispEdges"><rect x="0" y="0" width="2" height="2" fill="#464646"/><rect x="12" y="0" width="18" height="2" fill="#464646"/><rect x="0" y="2" width="4" height="2" fill="#464646"/><rect x="4" y="2" width="2" height="2" fill="#7a7a7a"/><rect x="10" y="2" width="22" height="2" fill="#464646"/><rect x="0" y="4" width="6" height="2" fill="#464646"/><rect x="6" y="4" width="2" height="2" fill="#7a7a7a"/><rect x="10" y="4" width="22" height="2" fill="#464646"/><rect x="0" y="6" width="32" height="2" fill="#464646"/><rect x="0" y="8" width="32" height="2" fill="#464646"/><rect x="0" y="10" width="6" height="2" fill="#464646"/><rect x="6" y="10" width="2" height="2" fill="#7a7a7a"/><rect x="10" y="10" width="22" height="2" fill="#464646"/><rect x="0" y="12" width="4" height="2" fill="#464646"/><rect x="4" y="12" width="2" height="2" fill="#7a7a7a"/><rect x="10" y="12" width="22" height="2" fill="#464646"/><rect x="0" y="14" width="2" height="2" fill="#464646"/><rect x="12" y="14" width="18" height="2" fill="#464646"/></svg><div class="a" style="left:2696px;top:174px;width:32px;height:31px;background:linear-gradient(#fdfdfd,#f1f1f1);border:1px solid #8f8f8f;border-radius:4px;box-shadow:0 0 1px #777"></div><svg style="left:2701px;top:178px" width="22" height="22" viewBox="0 0 22 22"><circle cx="11" cy="11" r="10" fill="#d0203a"/><circle cx="11" cy="11" r="9" fill="#dc2a44"/><path d="M7.5 7.5 L14.5 14.5 M14.5 7.5 L7.5 14.5" stroke="#f4c8c8" stroke-width="2.4"/></svg><div class="a" style="left:2268px;top:224.5px;width:290px;height:49px;background:linear-gradient(#fdfdfd,#efefef);border:1.5px solid #a9a9a9;border-radius:5px"></div><svg style="left:2528px;top:245px" width="14" height="7" viewBox="0 0 14 7"><path d="M0 0 H14 L7 7 Z" fill="#555"/></svg><div class="a" style="left:2570px;top:224.5px;width:159px;height:49px;background:linear-gradient(#fdfdfd,#efefef);border:1.5px solid #a9a9a9;border-radius:5px"></div><div class="a" style="left:2192px;top:290px;width:541px;height:934px;background:#fff;border:1.5px solid #b0b0b0"></div><svg style="left:2206px;top:305px" width="16" height="8" viewBox="0 0 16 8"><path d="M0 0 H16 L8 8 Z" fill="#555"/></svg><div class="a" style="left:2462px;top:296px;width:1px;height:330px;background:repeating-linear-gradient(#ececec 0 26px,transparent 26px 34px)"></div><div class="a" style="left:2468px;top:362.5px;width:28px;height:28px;background:#fff;border:1.5px solid #a8a8a8"></div><div class="a" style="left:2468px;top:498px;width:28px;height:28px;background:#fff;border:1.5px solid #a8a8a8"></div><svg style="left:2474px;top:504px" width="17" height="17" viewBox="0 0 17 17"><path d="M1.5 8 L6.5 14.5 L15.5 1.5" fill="none" stroke="#111" stroke-width="3.2"/></svg><svg style="left:2249px;top:609px" width="9" height="13" viewBox="0 0 9 13"><path d="M0 0 L9 6.5 L0 13 Z" fill="#555"/></svg><div class="a" style="left:2196.5px;top:1236.5px;width:168.5px;height:48.5px;background:linear-gradient(#fcfcfc,#ececec);border:1.5px solid #a9a9a9;border-radius:5px"></div><div class="a" style="left:2378.5px;top:1236.5px;width:168.5px;height:48.5px;background:linear-gradient(#fcfcfc,#ececec);border:1.5px solid #a9a9a9;border-radius:5px"></div><div class="a" style="left:2560.5px;top:1236.5px;width:168.5px;height:48.5px;background:linear-gradient(#fcfcfc,#ececec);border:1.5px solid #a9a9a9;border-radius:5px"></div><div class="a" style="left:1352.0px;top:1293px;width:2px;height:2px;background:#b0b0b0"></div><div class="a" style="left:1357.3px;top:1293px;width:2px;height:2px;background:#b0b0b0"></div><div class="a" style="left:1362.6px;top:1293px;width:2px;height:2px;background:#b0b0b0"></div><div class="a" style="left:1367.9px;top:1293px;width:2px;height:2px;background:#b0b0b0"></div><div class="a" style="left:1373.2px;top:1293px;width:2px;height:2px;background:#b0b0b0"></div><div class="a" style="left:1378.5px;top:1293px;width:2px;height:2px;background:#b0b0b0"></div><div class="a" style="left:1383.8px;top:1293px;width:2px;height:2px;background:#b0b0b0"></div><div class="a" style="left:0px;top:1302px;width:2734px;height:44px;background:#b8b8b8"></div><svg style="left:6px;top:1310px" width="33" height="33" viewBox="0 0 33 33"><circle cx="16.5" cy="16.5" r="14" fill="#fff" stroke="#5a5a5a" stroke-width="3.5"/><path d="M12 7 V18.5 H21" fill="none" stroke="#111" stroke-width="2.4"/></svg><div class="a" style="left:2696px;top:1308px;width:32px;height:31px;background:linear-gradient(#fdfdfd,#f1f1f1);border:1px solid #8f8f8f;border-radius:4px;box-shadow:0 0 1px #777"></div><svg style="left:2701px;top:1312px" width="22" height="22" viewBox="0 0 22 22"><circle cx="11" cy="11" r="10" fill="#d0203a"/><circle cx="11" cy="11" r="9" fill="#dc2a44"/><path d="M7.5 7.5 L14.5 14.5 M14.5 7.5 L7.5 14.5" stroke="#f4c8c8" stroke-width="2.4"/></svg><div class="a" style="left:149px;top:1360.5px;width:214px;height:49px;background:#fff;border:1.5px solid #a9a9a9;border-radius:4px"></div><div class="a" style="left:536.5px;top:1360.5px;width:215px;height:49px;background:#fff;border:1.5px solid #a9a9a9;border-radius:4px"></div><div class="a" style="left:892.5px;top:1360.5px;width:215px;height:49px;background:#fff;border:1.5px solid #a9a9a9;border-radius:4px"></div><div class="a" style="left:1280px;top:1360.5px;width:215px;height:49px;background:#fff;border:1.5px solid #a9a9a9;border-radius:4px"></div><div class="a" style="left:2512px;top:1372px;width:28.5px;height:28px;background:#fff;border:1.5px solid #a8a8a8"></div><div class="a" style="left:3px;top:1433px;width:92px;height:46px;background:linear-gradient(#fcfcfc,#ececec);border:1.5px solid #a9a9a9;border-radius:5px"></div><svg style="left:0px;top:1470px" width="14" height="14" viewBox="0 0 14 14"><path d="M0 0 Q0 14 14 14 L0 14 Z" fill="#9a9a9a"/></svg><svg style="left:2720px;top:1466px" width="14" height="18" viewBox="0 0 14 18"><path d="M14 0 Q14 18 0 18 L14 18 Z" fill="#9a9a9a"/></svg>
<div class="t" style="left:958.60px;top:24.49px;font-size:26px;color:#6b6b6b;font-weight:700;letter-spacing:0.045px;">/opt/ros/humble/share/turtlebot4_viz/rviz/model.rviz* - RViz</div>
<div class="t" style="left:18.30px;top:67.48px;font-size:24px;color:#1c1c1c;letter-spacing:-0.175px;">File</div>
<div class="t" style="left:86.40px;top:67.48px;font-size:24px;color:#1c1c1c;letter-spacing:-0.037px;">Panels</div>
<div class="t" style="left:188.90px;top:67.48px;font-size:24px;color:#1c1c1c;letter-spacing:0.596px;">Help</div>
<div class="t" style="left:64.10px;top:129.98px;font-size:22px;color:#1a1a1a;letter-spacing:1.249px;">Interact</div>
<div class="t" style="left:234.40px;top:129.98px;font-size:22px;color:#1a1a1a;letter-spacing:0.108px;">Move Camera</div>
<div class="t" style="left:463.60px;top:129.98px;font-size:22px;color:#1a1a1a;">Select</div>
<div class="t" style="left:614.00px;top:129.98px;font-size:22px;color:#1a1a1a;letter-spacing:-0.130px;">Focus Camera</div>
<div class="t" style="left:844.40px;top:129.98px;font-size:22px;color:#1a1a1a;letter-spacing:0.524px;">Measure</div>
<div class="t" style="left:1019.40px;top:129.98px;font-size:22px;color:#1a1a1a;letter-spacing:0.184px;">2D Pose Estimate</div>
<div class="t" style="left:1285.80px;top:129.98px;font-size:22px;color:#1a1a1a;letter-spacing:-0.066px;">2D Goal Pose</div>
<div class="t" style="left:1510.40px;top:129.98px;font-size:22px;color:#1a1a1a;letter-spacing:0.558px;">Publish Point</div>
<div class="t" style="left:51.00px;top:191.48px;font-size:24px;color:#1a1a1a;letter-spacing:0.044px;">Displays</div>
<div class="t" style="left:102.00px;top:232.98px;font-size:24px;color:#1c1c1c;letter-spacing:0.165px;">Fixed Frame</div>
<div class="t" style="left:318.00px;top:232.98px;font-size:24px;color:#1c1c1c;letter-spacing:-1.168px;">OK</div>
<div class="t" style="left:63.00px;top:271.28px;font-size:24px;color:#2f6eb8;font-weight:700;letter-spacing:0.108px;">Grid</div>
<div class="t" style="left:62.00px;top:308.88px;font-size:24px;color:#2f6eb8;font-weight:700;letter-spacing:0.782px;">RobotModel</div>
<div class="t" style="left:62.00px;top:347.38px;font-size:24px;color:#2f6eb8;font-weight:700;letter-spacing:-0.093px;">LaserScan</div>
<div class="t" style="left:63.00px;top:384.68px;font-size:24px;color:#c09a20;font-weight:700;letter-spacing:0.059px;">Camera</div>
<div class="t" style="left:62.00px;top:423.28px;font-size:24px;color:#2f6eb8;font-weight:700;letter-spacing:1.746px;">Image</div>
<div class="t" style="left:102.00px;top:460.68px;font-size:24px;color:#1c1c1c;letter-spacing:0.106px;">Status: Ok</div>
<div class="t" style="left:58.00px;top:498.38px;font-size:24px;color:#1c1c1c;letter-spacing:0.493px;">Topic</div>
<div class="t" style="left:318.30px;top:499.68px;font-size:24px;color:#1c1c1c;letter-spacing:1.106px;">/tb03/oakd/rgb/preview/im...</div>
<div class="t" style="left:8.00px;top:584.28px;font-size:24px;color:#111;font-weight:700;letter-spacing:0.033px;">Topic</div>
<div class="t" style="left:8.00px;top:615.78px;font-size:24px;color:#1c1c1c;letter-spacing:0.762px;">sensor_msgs/msg/Image topic to subscribe to.</div>
<div class="t" style="left:60.00px;top:749.48px;font-size:24px;color:#1c1c1c;letter-spacing:0.822px;">Add</div>
<div class="t" style="left:200.30px;top:749.48px;font-size:24px;color:#b8b8b8;letter-spacing:0.787px;">Duplicate</div>
<div class="t" style="left:380.50px;top:749.48px;font-size:24px;color:#b8b8b8;letter-spacing:0.116px;">Remove</div>
<div class="t" style="left:551.70px;top:749.48px;font-size:24px;color:#b8b8b8;letter-spacing:0.127px;">Rename</div>
<div class="t" style="left:49.50px;top:817.08px;font-size:24px;color:#1a1a1a;">Camera</div>
<div class="t" style="left:47.70px;top:962.18px;font-size:24px;color:#1a1a1a;letter-spacing:1.911px;">Image</div>
<div class="t" style="left:2244.40px;top:191.28px;font-size:24px;color:#1a1a1a;letter-spacing:-0.246px;">Views</div>
<div class="t" style="left:2196.30px;top:249.48px;font-size:24px;color:#1c1c1c;letter-spacing:0.292px;">Type:</div>
<div class="t" style="left:2278.00px;top:249.48px;font-size:24px;color:#1c1c1c;letter-spacing:0.55px;clip-path:polygon(-5px -40px,236px -40px,236px 40px,-5px 40px);">Orbit (rviz_default_plugins)</div>
<div class="t" style="left:2624.30px;top:249.58px;font-size:24px;color:#1c1c1c;letter-spacing:0.333px;">Zero</div>
<div class="t" style="left:2241.30px;top:308.68px;font-size:24px;color:#111;font-weight:700;letter-spacing:0.552px;">Current View</div>
<div class="t" style="left:2469.50px;top:308.68px;font-size:24px;color:#111;font-weight:700;letter-spacing:0.605px;">Orbit (rviz)</div>
<div class="t" style="left:2280.40px;top:342.63px;font-size:24px;color:#1c1c1c;letter-spacing:0.290px;">Near Clip Dist...</div>
<div class="t" style="left:2279.40px;top:376.58px;font-size:24px;color:#1c1c1c;letter-spacing:0.470px;">Invert Z Axis</div>
<div class="t" style="left:2281.40px;top:410.53px;font-size:24px;color:#1c1c1c;letter-spacing:0.376px;">Target Frame</div>
<div class="t" style="left:2280.40px;top:444.48px;font-size:24px;color:#1c1c1c;letter-spacing:0.425px;">Distance</div>
<div class="t" style="left:2280.40px;top:478.43px;font-size:24px;color:#1c1c1c;letter-spacing:-0.318px;">Focal Shape S...</div>
<div class="t" style="left:2280.40px;top:512.38px;font-size:24px;color:#1c1c1c;letter-spacing:-0.184px;">Focal Shape F...</div>
<div class="t" style="left:2281.40px;top:546.33px;font-size:24px;color:#1c1c1c;letter-spacing:-1.287px;">Yaw</div>
<div class="t" style="left:2280.40px;top:580.28px;font-size:24px;color:#1c1c1c;letter-spacing:0.498px;">Pitch</div>
<div class="t" style="left:2280.40px;top:614.23px;font-size:24px;color:#1c1c1c;letter-spacing:0.161px;">Focal Point</div>
<div class="t" style="left:2469.50px;top:342.63px;font-size:24px;color:#1c1c1c;letter-spacing:-1.454px;">0.01</div>
<div class="t" style="left:2468.50px;top:410.53px;font-size:24px;color:#1c1c1c;letter-spacing:0.024px;">&lt;Fixed Frame&gt;</div>
<div class="t" style="left:2468.50px;top:444.48px;font-size:24px;color:#1c1c1c;letter-spacing:0.188px;">1.0433</div>
<div class="t" style="left:2469.50px;top:478.43px;font-size:24px;color:#1c1c1c;letter-spacing:-0.454px;">0.05</div>
<div class="t" style="left:2469.50px;top:546.33px;font-size:24px;color:#1c1c1c;letter-spacing:0.035px;">0.940387</div>
<div class="t" style="left:2469.50px;top:580.28px;font-size:24px;color:#1c1c1c;letter-spacing:0.035px;">0.320399</div>
<div class="t" style="left:2469.50px;top:614.23px;font-size:24px;color:#1c1c1c;letter-spacing:0.049px;">0.10681; 0.21921; 0.1...</div>
<div class="t" style="left:2254.40px;top:1261.28px;font-size:24px;color:#1c1c1c;letter-spacing:-0.785px;">Save</div>
<div class="t" style="left:2417.60px;top:1261.28px;font-size:24px;color:#1c1c1c;letter-spacing:0.196px;">Remove</div>
<div class="t" style="left:2598.30px;top:1261.28px;font-size:24px;color:#1c1c1c;letter-spacing:0.267px;">Rename</div>
<div class="t" style="left:50.00px;top:1325.38px;font-size:24px;color:#1a1a1a;letter-spacing:0.635px;">Time</div>
<div class="t" style="left:20.00px;top:1387.08px;font-size:24px;color:#1c1c1c;letter-spacing:-0.265px;">ROS Time:</div>
<div class="t" style="left:156.00px;top:1386.18px;font-size:24px;color:#1c1c1c;letter-spacing:0.126px;">1758920483.77</div>
<div class="t" style="left:376.80px;top:1387.08px;font-size:24px;color:#1c1c1c;letter-spacing:-0.491px;">ROS Elapsed:</div>
<div class="t" style="left:542.00px;top:1386.18px;font-size:24px;color:#1c1c1c;letter-spacing:0.272px;">67.86</div>
<div class="t" style="left:764.60px;top:1387.08px;font-size:24px;color:#1c1c1c;letter-spacing:0.491px;">Wall Time:</div>
<div class="t" style="left:898.90px;top:1386.18px;font-size:24px;color:#1c1c1c;letter-spacing:0.042px;">1758920483.81</div>
<div class="t" style="left:1120.50px;top:1387.08px;font-size:24px;color:#1c1c1c;letter-spacing:0.136px;">Wall Elapsed:</div>
<div class="t" style="left:1285.20px;top:1386.18px;font-size:24px;color:#1c1c1c;letter-spacing:0.422px;">67.86</div>
<div class="t" style="left:2550.00px;top:1387.88px;font-size:24px;color:#1c1c1c;letter-spacing:0.843px;">Experimental</div>
<div class="t" style="left:2664.20px;top:1449.68px;font-size:24px;color:#1c1c1c;letter-spacing:0.384px;">31 fps</div>
<div class="t" style="left:18.00px;top:1457.68px;font-size:24px;color:#1c1c1c;letter-spacing:-0.257px;">Reset</div>
</body></html>
